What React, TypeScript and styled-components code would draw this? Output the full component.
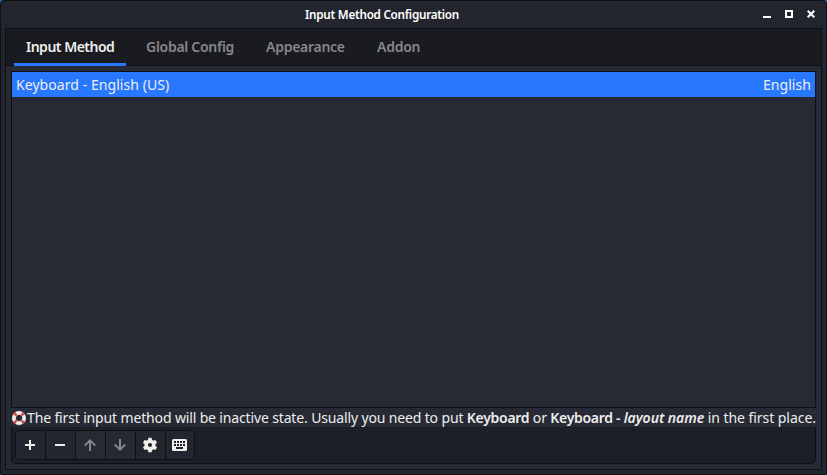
import React from "react";
import styled, { createGlobalStyle } from "styled-components";

const Global = createGlobalStyle`
  * { box-sizing: border-box; }
  html, body { margin: 0; background: #2068b0; }
  body { overflow: hidden; }
`;

const Window = styled.div`
  width: 827px;
  height: 475px;
  display: flex;
  flex-direction: column;
  padding: 0 4px 4px;
  border: 1px solid #0f1014;
  border-radius: 4px 4px 2px 2px;
  background: #23252e;
  color: #eeeeec;
  font-family: "Noto Sans", sans-serif;
  font-size: 14px;
  white-space: nowrap;
`;

const TitleBar = styled.header`
  flex: 0 0 27px;
  display: grid;
  grid-template-columns: 1fr auto 1fr;
  align-items: center;
  padding-right: 7px;
`;

const Title = styled.h1`
  grid-column: 2;
  margin: 0;
  width: 213px;
  padding: 0 0 1px 1.5px;
  font-size: 11.7px;
  line-height: 26px;
  font-weight: 600;
  letter-spacing: -0.26px;
  color: #fff;
`;

const WindowControls = styled.div`
  display: flex;
  justify-content: flex-end;
  gap: 14px;
  padding-bottom: 1px;
  svg { display: block; }
`;

const Panel = styled.main`
  flex: 1;
  min-height: 0;
  display: flex;
  flex-direction: column;
  border: 1px solid #0f1014;
  background: #272a34;
`;

const Tabs = styled.nav`
  flex: 0 0 37px;
  min-height: 0;
  display: flex;
  gap: 8px;
  padding-left: 8px;
  border-bottom: 1px solid #0f1014;
  background: #1a1b20;
`;

const Tab = styled.button<{ $active?: boolean; $width: number; $spacing: number }>`
  width: ${(p) => p.$width}px;
  height: 37px;
  padding: 0 0 0 12px;
  border: 0;
  border-bottom: 3px solid ${(p) => (p.$active ? "#2777ff" : "transparent")};
  background: none;
  color: ${(p) => (p.$active ? "#eeeeec" : "#86878a")};
  font: 600 14px/33px "Noto Sans", sans-serif;
  letter-spacing: ${(p) => p.$spacing}px;
  text-align: left;
`;

const Content = styled.section`
  flex: 1;
  min-height: 0;
  display: flex;
  flex-direction: column;
  padding: 5px;
`;

const List = styled.div`
  flex: 0 0 337px;
  border: 1px solid #0f1014;
`;

const Row = styled.div`
  height: 25px;
  display: flex;
  justify-content: space-between;
  padding: 0 4px;
  background: #2777ff;
  line-height: 25px;
  letter-spacing: 0.06px;
`;

const Hint = styled.div`
  flex: 0 0 19px;
  display: flex;
  align-items: center;
  svg { flex: none; display: block; }
`;

const HintText = styled.span`
  line-height: 19px;
  letter-spacing: -0.145px;
`;

const HintEnd = styled.span`
  letter-spacing: -0.05px;
`;

const Strong = styled.b<{ $italic?: boolean }>`
  font-weight: 600;
  font-style: ${(p) => (p.$italic ? "italic" : "normal")};
  letter-spacing: ${(p) => (p.$italic ? -0.05 : -0.29)}px;
`;

const Toolbar = styled.div`
  flex: 0 0 37px;
  display: flex;
  align-items: flex-start;
  padding: 3px;
  border: 1px solid #0f1014;
  border-top: 0;
  border-radius: 0 0 5px 5px;
  background: #1c1f26;
`;

const ButtonGroup = styled.div`
  display: flex;
  height: 30px;
  border: 1px solid #0f1014;
  border-radius: 5px;
  overflow: hidden;
  background: #23262f;
`;

const ToolButton = styled.button`
  width: 30px;
  height: 28px;
  padding: 0 0 0 6px;
  border: 0;
  border-right: 1px solid #0f1014;
  display: flex;
  align-items: center;
  justify-content: flex-start;
  background: #23262f;
  color: #eeeeec;
  &:last-child { border-right: 0; width: 28px; }
  &:disabled { color: #86878a; background: #272a34; }
  svg { display: block; flex: none; }
`;

const Icon = ({ children }: { children: React.ReactNode }) => (
  <svg width="16" height="16" viewBox="0 0 16 16" fill="none" stroke="currentColor" strokeWidth="2">
    {children}
  </svg>
);

const Lifebuoy = () => (
  <svg width="16" height="18" viewBox="0 0 16 18">
    <circle cx="8" cy="9" r="5.1" fill="none" stroke="#99969b" strokeWidth="4.2" />
    <circle cx="8" cy="9" r="5.1" fill="none" stroke="#f3f0ee" strokeWidth="3.3" />
    <circle cx="8" cy="9" r="5.1" fill="none" stroke="#e44b40" strokeWidth="3.5"
      pathLength="80" strokeDasharray="6 14" strokeDashoffset="-7" />
  </svg>
);

const gearTeeth = [0, 60, 120, 180, 240, 300];
const keys = [2, 5, 8, 11];

export default function App() {
  return (
    <>
      <Global />
      <Window>
        <TitleBar>
          <Title>Input Method Configuration</Title>
          <WindowControls>
            <svg width="8" height="8"><path d="M0 6h8v2H0z" fill="#fff" /></svg>
            <svg width="8" height="8"><path d="M1 1h6v6H1z" fill="none" stroke="#fff" strokeWidth="2" /></svg>
            <svg width="8" height="8"><path d="M.7.7l6.6 6.6M7.3.7L.7 7.3" stroke="#fff" strokeWidth="2" /></svg>
          </WindowControls>
        </TitleBar>
        <Panel>
          <Tabs>
            <Tab $active $width={112} $spacing={-0.5}>Input Method</Tab>
            <Tab $width={112} $spacing={-0.28}>Global Config</Tab>
            <Tab $width={103} $spacing={-0.27}>Appearance</Tab>
            <Tab $width={70} $spacing={-0.25}>Addon</Tab>
          </Tabs>
          <Content>
            <List>
              <Row><span>Keyboard - English (US)</span><span>English</span></Row>
            </List>
            <Hint>
              <Lifebuoy />
              <HintText>
                The first input method will be inactive state. Usually you need to put <Strong>Keyboard</Strong> or{" "}
                <Strong>Keyboard - </Strong><Strong $italic>layout name</Strong>
                <HintEnd> in the first place.</HintEnd>
              </HintText>
            </Hint>
            <Toolbar>
              <ButtonGroup>
                <ToolButton aria-label="Add"><Icon><path d="M8 3v10M3 8h10" /></Icon></ToolButton>
                <ToolButton aria-label="Remove"><Icon><path d="M3 8h10" /></Icon></ToolButton>
                <ToolButton aria-label="Move up" disabled><Icon><path d="M8 14V3M2.7 8.6L8 3.3l5.3 5.3" /></Icon></ToolButton>
                <ToolButton aria-label="Move down" disabled><Icon><path d="M8 2v11M2.7 7.4L8 12.7l5.3-5.3" /></Icon></ToolButton>
                <ToolButton aria-label="Configure">
                  <Icon>
                    <circle cx="8" cy="8" r="3.8" strokeWidth="3.4" />
                    {gearTeeth.map((a) => (
                      <path key={a} d="M6.4 .8h3.2l.6 3H5.8z" fill="currentColor" stroke="none" transform={`rotate(${a} 8 8)`} />
                    ))}
                  </Icon>
                </ToolButton>
                <ToolButton aria-label="Keyboard layout">
                  <Icon>
                    <rect x="0" y="2" width="15" height="12" rx="1.5" fill="currentColor" stroke="none" />
                    {keys.map((x) => (
                      <path key={x} d={`M${x} 4h2v2h-2zM${x} 7h2v2h-2z`} fill="#1c1f26" stroke="none" />
                    ))}
                    <path d="M4 11h7" stroke="#1c1f26" strokeWidth="1.8" />
                  </Icon>
                </ToolButton>
              </ButtonGroup>
            </Toolbar>
          </Content>
        </Panel>
      </Window>
    </>
  );
}
